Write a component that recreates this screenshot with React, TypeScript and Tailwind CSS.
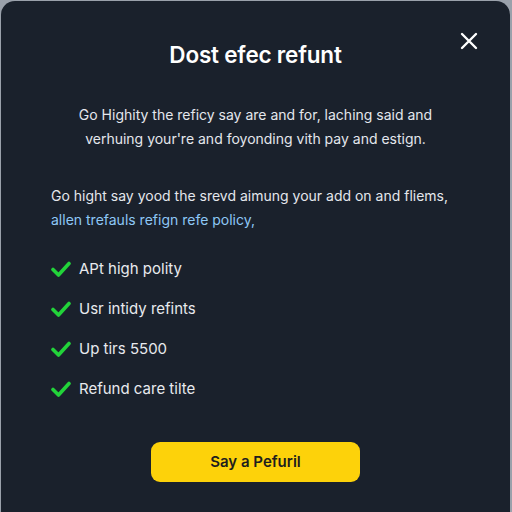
import React from "react";

const items = ["APt high polity", "Usr intidy refints", "Up tirs 5500", "Refund care tilte"];

function Check() {
  return (
    <svg width="20" height="16" viewBox="0 0 20 16" fill="none">
      <path d="M2 8.5 L7.5 14 L18 2.5" stroke="#22d33a" strokeWidth="3.6" strokeLinecap="round" strokeLinejoin="round" />
    </svg>
  );
}

export default function App() {
  return (
    <div className="w-[512px] h-[512px] bg-[#9aa1ab] pt-[1px] pl-[1px] pr-[2px] overflow-hidden" style={{ fontFamily: "Inter, 'Open Sans', sans-serif" }}>
      <div className="relative h-[511px] bg-[#1a212c] rounded-t-[14px] flex flex-col">
        <button className="absolute right-[32px] top-[31px] text-white">
          <svg width="18" height="18" viewBox="0 0 18 18" fill="none">
            <path d="M2 2 L16 16 M16 2 L2 16" stroke="white" strokeWidth="2.4" strokeLinecap="round" />
          </svg>
        </button>
        <h1 className="mt-[39px] text-center text-[22.5px] font-semibold text-white leading-[30px] tracking-[-0.2px]">Dost efec refunt</h1>
        <p className="mt-[33px] text-center text-[14px] leading-[24px] text-[#e4e7ec] px-[40px]">
          Go Highity the reficy say are and for, laching said and
          <br />
          verhuing your're and foyonding vith pay and estign.
        </p>
        <p className="mt-[33px] pl-[50px] text-[14px] leading-[24px] text-[#e4e7ec]">
          Go hight say yood the srevd aimung your add on and fliems,
          <br />
          <span className="text-[#8ec8f6]">allen trefauls refign refe policy,</span>
        </p>
        <ul className="mt-[26px] pl-[50px] flex flex-col gap-[18px]">
          {items.map((t) => (
            <li key={t} className="flex items-center gap-[8px] h-[22px] text-[15px] text-[#e8eaee]">
              <Check />
              <span>{t}</span>
            </li>
          ))}
        </ul>
        <div className="mt-[42px] flex justify-center">
          <button className="w-[209px] h-[40px] rounded-[9px] bg-[#fdd20a] text-[#1e1e1e] text-[15px] font-semibold">Say a Pefuril</button>
        </div>
      </div>
    </div>
  );
}
